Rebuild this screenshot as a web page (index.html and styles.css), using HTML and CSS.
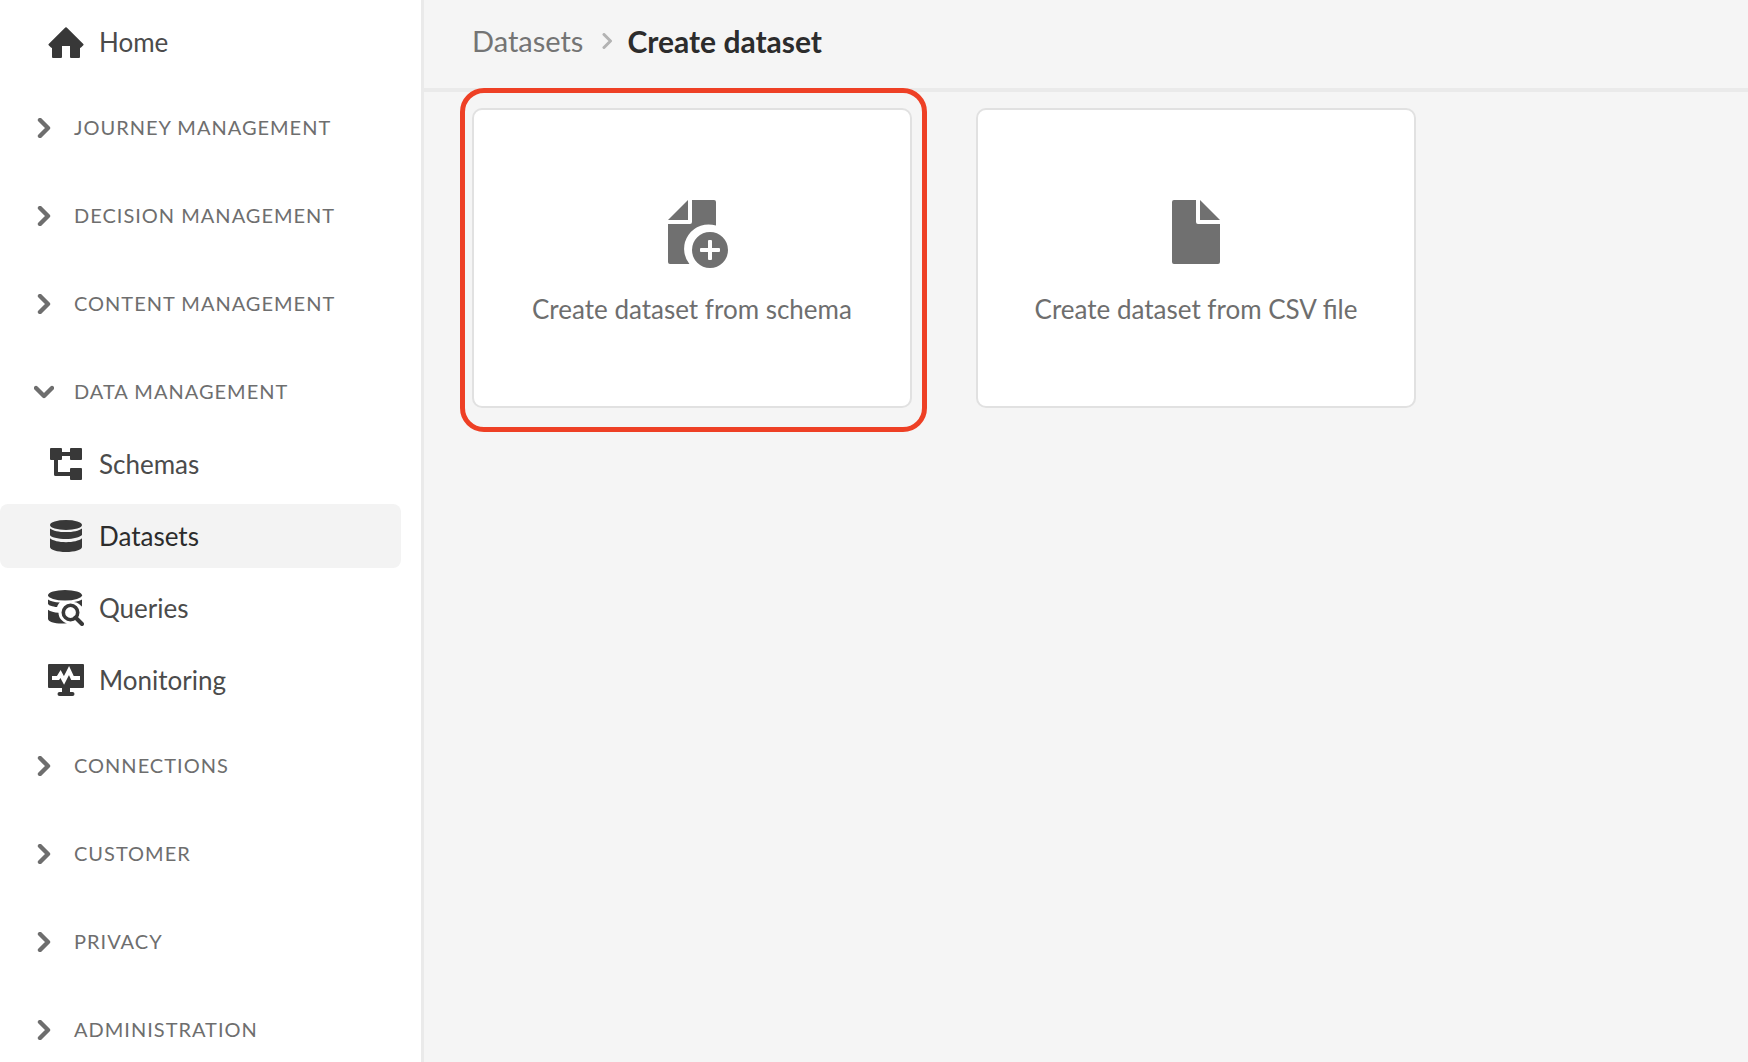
FILE: index.html
```html
<!DOCTYPE html>
<html lang="en">
<head>
<meta charset="utf-8">
<meta name="viewport" content="width=device-width, initial-scale=1">
<title>Create dataset</title>
<link rel="stylesheet" href="styles.css">
</head>
<body>
<svg class="sprite" aria-hidden="true">
  <symbol id="chevron" viewBox="0 0 20 20"><path d="M6 2l8 8-8 8" fill="none" stroke="currentColor" stroke-width="4.4" stroke-linecap="round" stroke-linejoin="round"/></symbol>
</svg>
<div class="app">
  <nav class="sidebar" aria-label="Main">
    <a class="item item-home" href="#">
      <svg class="item-icon" viewBox="0 0 36 36" aria-hidden="true"><path d="M35.3 20.1 18.7 3.6a1 1 0 0 0-1.4 0L.7 20.1a.8.8 0 0 0 0 1.2L3 23.5a1.5 1.5 0 0 0 1 .5V33a1 1 0 0 0 1 1h8a1 1 0 0 0 1-1V22h8v11a1 1 0 0 0 1 1h8a1 1 0 0 0 1-1v-9a1.500 1.500 0 0 0 1-.5l2.300-2.200a.8.8 0 0 0 0-1.200z"/></svg>
      <span>Home</span>
    </a>
    <section class="group"><button class="group-title" type="button" aria-expanded="false"><svg class="chevron" aria-hidden="true"><use href="#chevron"/></svg><span class="group-label">JOURNEY MANAGEMENT</span></button></section>
    <section class="group"><button class="group-title" type="button" aria-expanded="false"><svg class="chevron" aria-hidden="true"><use href="#chevron"/></svg><span class="group-label">DECISION MANAGEMENT</span></button></section>
    <section class="group"><button class="group-title" type="button" aria-expanded="false"><svg class="chevron" aria-hidden="true"><use href="#chevron"/></svg><span class="group-label">CONTENT MANAGEMENT</span></button></section>
    <section class="group group-open">
      <button class="group-title" type="button" aria-expanded="true"><svg class="chevron" aria-hidden="true"><use href="#chevron"/></svg><span class="group-label">DATA MANAGEMENT</span></button>
      <div class="items">
        <a class="item" href="#">
          <svg class="item-icon" viewBox="0 0 36 36" aria-hidden="true"><rect x="2" y="2" width="12" height="12" rx="1"/><rect x="22" y="2" width="12" height="12" rx="1"/><rect x="22" y="22" width="12" height="12" rx="1"/><path d="M13 6h10v4H13zM6 13h4v13h13v4H7.500A1.500 1.500 0 0 1 6 28.500z"/></svg>
          <span>Schemas</span>
        </a>
        <a class="item item-current" href="#" aria-current="page">
          <svg class="item-icon" viewBox="0 0 36 36" aria-hidden="true"><ellipse cx="18" cy="7" rx="16" ry="5"/><path d="M2 10.400c3 2.500 9 3.600 16 3.600s13-1.100 16-3.600V17c-2 2.300-8.500 4-16 4S2 19.300 2 17zM2 20.300C5 22.800 11 24.200 18 24.200s13-1.400 16-3.900V29c0 2.800-7.200 5-16 5S2 31.800 2 29z"/></svg>
          <span>Datasets</span>
        </a>
        <a class="item" href="#">
          <svg class="item-icon" viewBox="0 0 36 36" aria-hidden="true"><ellipse cx="17" cy="5.200" rx="17" ry="5.200"/><path d="M0 9.500c2.500 1.800 6.500 2.700 11.800 3-1.500 1.400-2.300 2.800-2.700 4.600C4.500 16.600 0 15.500 0 13.500zM26 11.900c3.500-.6 6.300-1.400 8-2.500v5.800c0 .6-.2 1-.6 1.400-1.100-2.300-3.700-4.200-7.400-4.700zM0 19.800c2.500 1.900 6 2.700 10.500 2.900 0 5 3.500 9 8.500 10.600C9 34.500 0 32.200 0 28.700z"/><circle cx="22.500" cy="22.500" r="7.200" fill="none" stroke="currentColor" stroke-width="3.600"/><path d="M27.500 27.500l6.500 6.500" fill="none" stroke="currentColor" stroke-width="4" stroke-linecap="round"/></svg>
          <span>Queries</span>
        </a>
        <a class="item" href="#">
          <svg class="item-icon" viewBox="0 0 36 36" aria-hidden="true"><path d="M1 2h34a1 1 0 0 1 1 1v22a1 1 0 0 1-1 1H22v4h2.500a2 2 0 0 1 0 4h-13a2 2 0 0 1 0-4H14v-4H1a1 1 0 0 1-1-1V3a1 1 0 0 1 1-1z"/><path class="pulse" d="M4 16h6l2.500-4 3.500 6.500L21 8.500l3.500 7.500H32"/></svg>
          <span>Monitoring</span>
        </a>
      </div>
    </section>
    <section class="group"><button class="group-title" type="button" aria-expanded="false"><svg class="chevron" aria-hidden="true"><use href="#chevron"/></svg><span class="group-label">CONNECTIONS</span></button></section>
    <section class="group"><button class="group-title" type="button" aria-expanded="false"><svg class="chevron" aria-hidden="true"><use href="#chevron"/></svg><span class="group-label">CUSTOMER</span></button></section>
    <section class="group"><button class="group-title" type="button" aria-expanded="false"><svg class="chevron" aria-hidden="true"><use href="#chevron"/></svg><span class="group-label">PRIVACY</span></button></section>
    <section class="group"><button class="group-title" type="button" aria-expanded="false"><svg class="chevron" aria-hidden="true"><use href="#chevron"/></svg><span class="group-label">ADMINISTRATION</span></button></section>
  </nav>
  <main class="main">
    <header class="topbar">
      <a class="crumb" href="#">Datasets</a>
      <svg class="crumb-chevron" viewBox="-2 0 16 16" aria-hidden="true"><path d="M5 1.500 11.500 8 5 14.500" fill="none" stroke="currentColor" stroke-width="3" stroke-linecap="round" stroke-linejoin="round"/></svg>
      <h1 class="crumb-current">Create dataset</h1>
    </header>
    <div class="cards">
      <button class="card card-marked" type="button">
        <svg class="card-icon" viewBox="0 0 36 36" aria-hidden="true"><path d="M16 2v10H6z"/><path d="M18 2h11a1 1 0 0 1 1 1v11.800a12.200 12.200 0 0 0-13.300 19.200H7a1 1 0 0 1-1-1V14h11a1 1 0 0 0 1-1z"/><path fill-rule="evenodd" d="M27 18a9 9 0 1 0 0 18 9 9 0 0 0 0-18zm5 9.500a.5.5 0 0 1-.5.5H28v3.500a.5.5 0 0 1-.5.5h-1a.5.5 0 0 1-.5-.5V28h-3.500a.5.5 0 0 1-.5-.5v-1a.5.5 0 0 1 .5-.5H26v-3.500a.5.5 0 0 1 .5-.5h1a.5.5 0 0 1 .5.5V26h3.500a.5.5 0 0 1 .5.5z"/></svg>
        <span>Create dataset from schema</span>
      </button>
      <button class="card" type="button">
        <svg class="card-icon" viewBox="0 0 36 36" aria-hidden="true"><path d="M20 2v10h10z"/><path d="M18 2H7a1 1 0 0 0-1 1v30a1 1 0 0 0 1 1h22a1 1 0 0 0 1-1V14H19a1 1 0 0 1-1-1z"/></svg>
        <span>Create dataset from CSV file</span>
      </button>
    </div>
  </main>
</div>
</body>
</html>
```
FILE: styles.css
```css
* { box-sizing: border-box; }

body {
  margin: 0;
  font-family: Lato, "Open Sans", sans-serif;
  background: #f5f5f5;
}

a { color: inherit; text-decoration: none; }

button {
  font: inherit;
  color: inherit;
  background: none;
  border: 0;
  padding: 0;
  cursor: pointer;
}

.sprite { display: none; }

.app {
  display: flex;
  min-height: 100vh;
}

/* Sidebar */
.sidebar {
  flex: 0 0 424px;
  padding: 10px 20px 0 0;
  background: #fff;
  border-right: 3px solid #eaeaea;
}

.item {
  display: flex;
  align-items: center;
  gap: 15px;
  height: 64px;
  padding-left: 48px;
  border-radius: 8px;
  font-size: 26px;
  line-height: 32px;
  color: #4b4b4b;
}

.item-home { margin-bottom: 22px; }

.item-current {
  background: #f3f3f3;
  color: #2c2c2c;
}

.item-icon {
  width: 36px;
  height: 36px;
  color: #383838;
  fill: currentColor;
}

.pulse {
  fill: none;
  stroke: #fff;
  stroke-width: 4;
}

.group { margin-bottom: 24px; }
.group-open { margin-bottom: 22px; }
.group:last-child { margin-bottom: 0; }

.group-title {
  display: flex;
  align-items: center;
  gap: 20px;
  width: 100%;
  height: 64px;
  padding-left: 34px;
  font-size: 20px;
  line-height: 24px;
  letter-spacing: 1px;
  color: #6e6e6e;
}

.group-label { padding-bottom: 2px; }

.chevron {
  width: 20px;
  height: 20px;
  overflow: visible;
}

.group-open .chevron { transform: rotate(90deg); }

.items {
  display: flex;
  flex-direction: column;
  gap: 8px;
  margin-top: 8px;
}

/* Main area */
.main {
  flex: 1;
  min-width: 0;
}

.topbar {
  display: flex;
  align-items: center;
  gap: 14px;
  height: 92px;
  padding: 0 48px 6px;
  border-bottom: 4px solid #eaeaea;
  font-size: 29px;
  line-height: 36px;
}

.crumb { color: #747474; }

.crumb-chevron {
  width: 16px;
  height: 16px;
  color: #b3b3b3;
}

.crumb-current {
  margin: 0;
  font-size: 30px;
  font-weight: 700;
  color: #2c2c2c;
}

.cards {
  display: flex;
  flex-wrap: wrap;
  gap: 64px;
  padding: 16px 48px;
}

.card {
  position: relative;
  display: flex;
  flex-direction: column;
  align-items: center;
  justify-content: center;
  gap: 25px;
  width: 440px;
  height: 300px;
  padding-top: 5px;
  border: 2px solid #e1e1e1;
  border-radius: 10px;
  background: #fff;
  font-size: 26px;
  line-height: 32px;
  color: #6e6e6e;
}

.card-icon {
  width: 72px;
  height: 72px;
  fill: #707070;
}

.card-marked::after {
  content: "";
  position: absolute;
  inset: -22px -17px -26px -14px;
  border: 5px solid #ee4025;
  border-radius: 24px;
  pointer-events: none;
}
```
